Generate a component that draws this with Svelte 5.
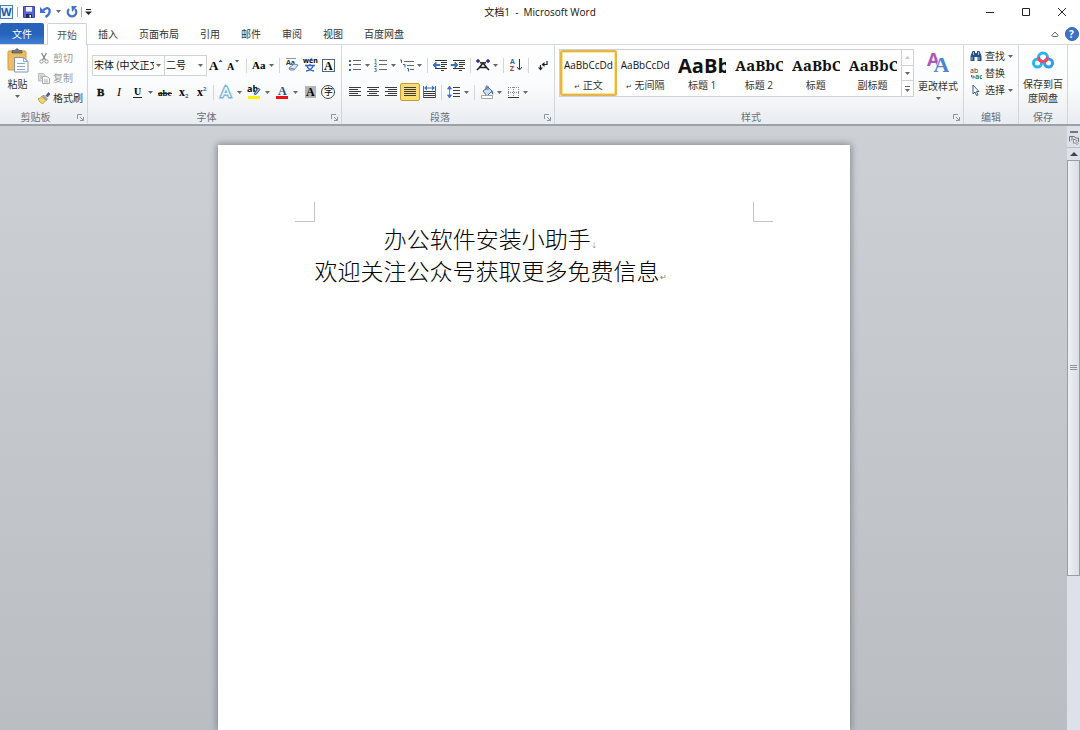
<script lang="ts">
	type Tool = {
		icon: string;
		label: string;
		menu?: boolean;
		tight?: boolean;
		active?: boolean;
		sep?: boolean;
	};

	const tabs = ['插入', '页面布局', '引用', '邮件', '审阅', '视图', '百度网盘'];

	const fontTop: Tool[] = [
		{ icon: 'grow', label: '增大字体' },
		{ icon: 'shrink', label: '缩小字体', sep: true },
		{ icon: 'case', label: '更改大小写', menu: true, tight: true, sep: true },
		{ icon: 'clear', label: '清除格式' },
		{ icon: 'pinyin', label: '拼音指南' },
		{ icon: 'boxed', label: '字符边框' }
	];

	const fontBottom: Tool[] = [
		{ icon: 'bold', label: '加粗' },
		{ icon: 'italic', label: '倾斜' },
		{ icon: 'underline', label: '下划线', menu: true },
		{ icon: 'strike', label: '删除线' },
		{ icon: 'sub', label: '下标' },
		{ icon: 'sup', label: '上标', sep: true },
		{ icon: 'effects', label: '文本效果', menu: true },
		{ icon: 'highlight', label: '突出显示', menu: true },
		{ icon: 'color', label: '字体颜色', menu: true },
		{ icon: 'shaded', label: '字符底纹' },
		{ icon: 'enclose', label: '带圈字符' }
	];

	const paraTop: Tool[] = [
		{ icon: 'bullets', label: '项目符号', menu: true, tight: true },
		{ icon: 'numbers', label: '编号', menu: true, tight: true },
		{ icon: 'levels', label: '多级列表', menu: true, tight: true, sep: true },
		{ icon: 'outdent', label: '减少缩进量' },
		{ icon: 'indent', label: '增加缩进量', sep: true },
		{ icon: 'asian', label: '中文版式', menu: true, tight: true, sep: true },
		{ icon: 'sort', label: '排序', sep: true },
		{ icon: 'marks', label: '显示编辑标记' }
	];

	const paraBottom: Tool[] = [
		{ icon: 'left', label: '左对齐' },
		{ icon: 'center', label: '居中' },
		{ icon: 'right', label: '右对齐' },
		{ icon: 'justify', label: '两端对齐', active: true },
		{ icon: 'spread', label: '分散对齐', sep: true },
		{ icon: 'spacing', label: '行距', menu: true, tight: true, sep: true },
		{ icon: 'fill', label: '底纹', menu: true, tight: true },
		{ icon: 'border', label: '边框', menu: true, tight: true }
	];

	const styles = [
		{ name: '正文', sample: 'AaBbCcDd', kind: 'plain', mark: true },
		{ name: '无间隔', sample: 'AaBbCcDd', kind: 'plain', mark: true },
		{ name: '标题 1', sample: 'AaBb', kind: 'h1' },
		{ name: '标题 2', sample: 'AaBbC', kind: 'h2' },
		{ name: '标题', sample: 'AaBbC', kind: 'h2' },
		{ name: '副标题', sample: 'AaBbC', kind: 'h2' }
	];

	let current = $state('正文');
</script>

{#snippet arrow()}
	<svg class="arrow" viewBox="0 0 5 3" aria-hidden="true"><path d="M0 0h5L2.5 3z" fill="#666" /></svg>
{/snippet}

{#snippet lines(rows: number[][])}
	{#each rows as [x1, x2, y]}
		<path d="M{x1} {y}.5H{x2}" stroke="#3c3c3c" />
	{/each}
{/snippet}

{#snippet glyph(name: string)}
	<svg class="glyph" viewBox="0 0 16 16" aria-hidden="true">
		{#if name === 'grow'}
			<text x="1" y="13" class="serif" font-size="13">A</text>
			<path d="M10.500 5h4L12.500 2.500z" fill="#2b5ba8" />
		{:else if name === 'shrink'}
			<text x="1" y="13" class="serif" font-size="10">A</text>
			<path d="M9 3h4l-2 2.500z" fill="#2b5ba8" />
		{:else if name === 'case'}
			<text x="1" y="12" class="serif" font-size="11">Aa</text>
		{:else if name === 'clear'}
			<text x="2" y="8" class="sans" font-size="7" font-weight="700" fill="#333">Aa</text>
			<path d="M2 1.500h10" stroke="#8b96a8" />
			<path d="M5 11l5-4 4 1-4 5H6z" fill="#dfe8f7" stroke="#6c86b4" />
			<path d="M5 11l5 1" stroke="#6c86b4" />
		{:else if name === 'pinyin'}
			<text x="1" y="6" class="sans" font-size="7" font-weight="700">wén</text>
			<path d="M3 8.500h10M8 7v2M5 9c1 3 4 4.500 7 5M11 9c-1 3-4 4.500-7 5" stroke="#3863c5" stroke-width="1.400" fill="none" />
		{:else if name === 'boxed'}
			<rect x="2.500" y="2.500" width="12" height="12" fill="#fff" stroke="#546682" />
			<text x="4" y="13" class="serif" font-size="12">A</text>
		{:else if name === 'bold'}
			<text x="4" y="12" class="serif" font-size="11" stroke="#222" stroke-width=".4">B</text>
		{:else if name === 'italic'}
			<text x="6" y="12" class="serif light" font-size="12" font-style="italic">I</text>
		{:else if name === 'underline'}
			<text x="5" y="11" class="serif" font-size="10">U</text>
			<path d="M4 13.500h9" stroke="#222" />
		{:else if name === 'strike'}
			<text x="1" y="12" class="serif" font-size="9">abc</text>
			<path d="M1 9.500h14" stroke="#222" />
		{:else if name === 'sub'}
			<text x="4" y="12" class="serif" font-size="12">x</text>
			<text x="10" y="14" class="sans" font-size="6" font-weight="700" fill="#3863c5">2</text>
		{:else if name === 'sup'}
			<text x="4" y="12" class="serif" font-size="12">x</text>
			<text x="10" y="7" class="sans" font-size="6" font-weight="700" fill="#3863c5">2</text>
		{:else if name === 'effects'}
			<text x="3" y="13" class="sans" font-size="15" fill="#fff" stroke="#7cb6dd" stroke-width="3" paint-order="stroke">A</text>
		{:else if name === 'highlight'}
			<text x="1" y="8" class="sans" font-size="9" font-weight="700">ab</text>
			<path d="M8 10l4-6 2 1.500-4 5z" fill="#8fb0df" stroke="#36578c" />
			<path d="M2 12h12v3H2z" fill="#ffef00" />
		{:else if name === 'color'}
			<text x="4" y="11" class="serif" font-size="12" fill="#254f8f">A</text>
			<path d="M2 12h12v3H2z" fill="#ee1111" />
		{:else if name === 'shaded'}
			<path d="M3 2h11v12H3z" fill="#b5b5b5" />
			<text x="4" y="12" class="serif" font-size="12">A</text>
		{:else if name === 'enclose'}
			<circle cx="8" cy="8" r="6.500" fill="#fff" stroke="#444" />
			<text x="4" y="11" class="cjk" font-size="9">字</text>
		{:else if name === 'bullets' || name === 'numbers'}
			{#each [3, 7, 12] as y, i}
				{#if name === 'bullets'}
					<rect x="2" y={y} width="2" height="2" fill="#3863b5" />
				{:else}
					<text x="1" y={y + 3} class="sans" font-size="5" font-weight="700" fill="#3863b5">{i + 1}</text>
				{/if}
				<path d="M6 {y}.500h8" stroke="#666" />
			{/each}
		{:else if name === 'levels'}
			<path d="M5 4.500h10M8 8.500h7M11 12.500h4" stroke="#666" />
			<path d="M1 3h1.500v3M4 7.500h2v3M8 11.500h1.500v3" stroke="#3863b5" fill="none" />
		{:else if name === 'outdent'}
			<path d="M3 3.500h12M9 5.500h6M9 7.500h6M9 9.500h4M3 11.500h12M9 13.500h3" stroke="#333" stroke-width="1.200" />
			<path d="M8 7.500H4V5L1 8l3 3V8.500h4z" fill="#3d73c9" stroke="#3d73c9" />
		{:else if name === 'indent'}
			<path d="M3 3.500h12M9 5.500h6M9 7.500h6M9 9.500h4M3 11.500h12M9 13.500h3" stroke="#333" stroke-width="1.200" />
			<path d="M1 7.500h4V5l3 3-3 3V8.500H1z" fill="#3d73c9" stroke="#3d73c9" />
		{:else if name === 'asian'}
			<path d="M2 13l2-2 4-5 4 5 2 2M4 10.500h8M5 5.500l3 1 3-1" fill="none" stroke="#222" stroke-width="1.600" />
			<path d="M3 2v4M1 4h4M13 2v4M11 4h4" stroke="#252595" stroke-width="1.400" />
		{:else if name === 'sort'}
			<text x="2" y="7" class="sans" font-size="7" font-weight="700" fill="#3567ad">A</text>
			<text x="2" y="14" class="sans" font-size="7" font-weight="700" fill="#a83a3a">Z</text>
			<path d="M11.500 2v10M9 10l2.500 3 2.500-3" stroke="#333" fill="none" />
		{:else if name === 'marks'}
			<path d="M14 4v3.500h-3" fill="none" stroke="#222" stroke-width="1.200" />
			<path d="M11.500 5v5L8.500 7.500z" fill="#222" />
			<path d="M7.500 8v4" stroke="#222" stroke-width="1.200" />
			<path d="M5 10.500h5l-2.500 3z" fill="#222" />
		{:else if name === 'left'}
			{@render lines([[2, 14, 3], [2, 11, 5], [2, 14, 7], [2, 11, 9], [2, 14, 11]])}
		{:else if name === 'center'}
			{@render lines([[2, 14, 3], [4, 12, 5], [2, 14, 7], [4, 12, 9], [2, 14, 11]])}
		{:else if name === 'right'}
			{@render lines([[2, 14, 3], [5, 14, 5], [2, 14, 7], [5, 14, 9], [2, 14, 11]])}
		{:else if name === 'justify'}
			{@render lines([[2, 14, 3], [2, 14, 5], [2, 14, 7], [2, 14, 9], [2, 14, 11]])}
		{:else if name === 'spread'}
			<path d="M2.500 2v12M14.500 2v12" stroke="#536b91" />
			{@render lines([[3, 14, 7], [3, 14, 9], [3, 14, 11], [3, 14, 13]])}
			<path d="M3 4l3-2.500v2h5v-2L14 4l-3 2.500v-2H6v2z" fill="#3d73c9" />
		{:else if name === 'spacing'}
			<path d="M3.500 3v10M1.500 5l2-3 2 3zM1.500 11l2 3 2-3z" fill="#3d73c9" stroke="#3d73c9" stroke-width=".800" />
			{@render lines([[7, 14, 3], [7, 14, 6], [7, 14, 9], [7, 14, 12]])}
		{:else if name === 'fill'}
			<path d="M4 7l5-4 4 4-5 5z" fill="#cfdff3" stroke="#49658e" />
			<path d="M7 6V2.500q1.500-1.500 2 0V6" fill="none" stroke="#49658e" />
			<path d="M12 6q3 1 2 5l-2-3z" fill="#3d73c9" />
			<path d="M2.500 11.500h11v3h-11z" fill="#fff" stroke="#a4a4a4" />
		{:else if name === 'border'}
			<path d="M3 3.500h11M3 8.500h11M3.500 3v10M8.500 3v10M13.500 3v10" stroke="#888" stroke-dasharray="1 1" />
			<path d="M3 13.500h11" stroke="#333" />
		{/if}
	</svg>
{/snippet}

{#snippet toolRow(items: Tool[])}
	{#each items as tool (tool.icon)}
		<button class="tool" class:active={tool.active} class:tight={tool.tight} aria-label={tool.label}>
			{@render glyph(tool.icon)}
			{#if tool.menu}<span class="drop">{@render arrow()}</span>{/if}
		</button>
		{#if tool.sep}<i class="sep"></i>{/if}
	{/each}
{/snippet}

{#snippet caption(text: string, launcher: boolean)}
	<div class="caption" class:launchable={launcher}>
		<span>{text}</span>
		{#if launcher}
			<button class="launcher" aria-label="{text}设置">
				<svg viewBox="0 0 7 7"><path d="M.5 5V.5H5M3 3l3 3M6.500 3v3.500H3" fill="none" stroke="#8c949d" /></svg>
			</button>
		{/if}
	</div>
{/snippet}

<div class="window">
	<header class="titlebar">
		<div class="quick">
			<svg class="logo" viewBox="0 0 14 14">
				<rect x=".5" y=".5" width="12" height="13" fill="#e9f2fb" stroke="#4b7fb8" />
				<text x="1" y="11" class="sans" font-size="11" font-weight="700" fill="#1e5aa5">W</text>
			</svg>
			<i class="bar"></i>
			<button aria-label="保存">
				<svg viewBox="0 0 12 12">
					<path d="M.5.5h11v11h-11z" fill="#5b66d2" stroke="#3c43a5" />
					<path d="M3 1h6v4.500H3z" fill="#f2f5ff" />
					<path d="M3 8h6v4H3z" fill="#222d62" />
					<path d="M6.500 9H8v2.500H6.500z" fill="#fff" />
				</svg>
			</button>
			<button class="undo" aria-label="撤消">
				<svg viewBox="0 0 12 12">
					<path d="M3 4.500Q8 0 9.500 4q1 4-4 7" fill="none" stroke="#4472cb" stroke-width="2.400" />
					<path d="M0 1v6h6z" fill="#4472cb" />
				</svg>
				{@render arrow()}
			</button>
			<button aria-label="重复">
				<svg viewBox="0 0 12 12">
					<path d="M3 3a4.300 4.300 0 1 0 6 0" fill="none" stroke="#4472cb" stroke-width="2.200" />
					<path d="M5.500 0H11L6 6z" fill="#4472cb" />
				</svg>
			</button>
			<i class="bar"></i>
			<button class="customize" aria-label="自定义快速访问工具栏">
				<svg viewBox="0 0 7 6"><path d="M1 .5h5" stroke="#222" /><path d="M0 2.500h7L3.500 6z" fill="#222" /></svg>
			</button>
		</div>
		<h1>文档1&nbsp; -&nbsp; Microsoft Word</h1>
		<div class="controls">
			<button aria-label="最小化"><svg viewBox="0 0 10 10"><path d="M1 5.500h8" /></svg></button>
			<button aria-label="最大化"><svg viewBox="0 0 10 10"><path d="M1.500 1.500h7v7h-7z" /></svg></button>
			<button aria-label="关闭"><svg viewBox="0 0 10 10"><path d="M1 1l8 8M9 1L1 9" /></svg></button>
		</div>
	</header>

	<nav class="tabs">
		<button class="file">文件</button>
		<button class="tab home">开始</button>
		{#each tabs as tab}
			<button class="tab">{tab}</button>
		{/each}
		<div class="help">
			<button aria-label="功能区最小化">
				<svg class="collapse" viewBox="0 0 8 6"><path d="M.7 4.500L4 1l3.300 3.500L6 5.500H2z" fill="#fff" stroke="#555" stroke-width=".9" /></svg>
			</button>
			<button aria-label="帮助">
				<svg class="question" viewBox="0 0 14 14">
					<circle cx="7" cy="7" r="6.500" fill="#3d72c8" stroke="#3560ad" />
					<text x="4" y="11" class="sans" font-size="10" font-weight="700" fill="#fff">?</text>
				</svg>
			</button>
		</div>
	</nav>

	<section class="ribbon">
		<div class="group">
			<div class="body clipboard">
				<button class="big paste">
					<svg viewBox="0 0 22 25">
						<rect x="1" y="3" width="18" height="19" rx="1" fill="#efbd62" stroke="#d49a3f" />
						<path d="M5 5V2.500h3Q10-1 12 2.500h3V5z" fill="#777b80" stroke="#55595e" stroke-width=".8" />
						<path d="M7.500 9.500h9l4.500 4v10.500H7.500z" fill="#fbfdff" stroke="#8595b0" />
						<path d="M16.500 9.500v4H21M10 15.500h8M10 18.500h8M10 21.500h8" fill="none" stroke="#8ba6d1" />
					</svg>
					<span>粘贴</span>
					{@render arrow()}
				</button>
				<div class="stack">
					<button class="item" disabled>
						<svg viewBox="0 0 12 12">
							<path d="M3.500 1l4 7M8.500 1l-4 7" stroke="#8c8c8c" stroke-width="1.400" />
							<circle cx="3.500" cy="9.500" r="1.700" fill="none" stroke="#999" />
							<circle cx="8.500" cy="9.500" r="1.700" fill="none" stroke="#999" />
						</svg>
						剪切
					</button>
					<button class="item" disabled>
						<svg viewBox="0 0 12 12">
							<path d="M.5 1.500h5l1.500 1.500v6H.5z" fill="#ddd" stroke="#bbb" />
							<path d="M4.500 4.500h4.500l2.500 2v5h-7z" fill="#f6f6f6" stroke="#aaa" />
							<path d="M6 8h4M6 9.800h4M2 4h2M2 6h2" stroke="#aaa" stroke-width=".8" />
						</svg>
						复制
					</button>
					<button class="item">
						<svg viewBox="0 0 12 12">
							<path d="M8 3.500L10.500.5 12 2 9.500 5z" fill="#54589b" stroke="#383b73" stroke-width=".6" />
							<path d="M5.500 3l4 4L8 8.500 4 4.500z" fill="#a9b1c4" stroke="#667" stroke-width=".6" />
							<path d="M4 4.500L8 8.500 4.500 12Q1 10 0 6.500q2 .5 4-2z" fill="#f2d66a" stroke="#a58a2d" stroke-width=".7" />
						</svg>
						格式刷
					</button>
				</div>
			</div>
			{@render caption('剪贴板', true)}
		</div>

		<div class="group">
			<div class="body rows">
				<div class="row">
					<label class="combo family">
						<select aria-label="字体"><option>宋体 (中文正文)</option><option>黑体</option></select>
						{@render arrow()}
					</label>
					<label class="combo size">
						<select aria-label="字号"><option>二号</option><option>三号</option></select>
						{@render arrow()}
					</label>
					{@render toolRow(fontTop)}
				</div>
				<div class="row">{@render toolRow(fontBottom)}</div>
			</div>
			{@render caption('字体', true)}
		</div>

		<div class="group">
			<div class="body rows">
				<div class="row">{@render toolRow(paraTop)}</div>
				<div class="row">{@render toolRow(paraBottom)}</div>
			</div>
			{@render caption('段落', true)}
		</div>

		<div class="group wide">
			<div class="body styles">
				<div class="gallery">
					{#each styles as style (style.name)}
						<button class="style" class:selected={current === style.name} onclick={() => (current = style.name)}>
							<span class="sample {style.kind}">{style.sample}</span>
							<span class="name">
								{#if style.mark}<small>↵</small>{/if}
								{style.name}
							</span>
						</button>
					{/each}
					<div class="scroller">
						<button aria-label="上一行" disabled><svg viewBox="0 0 5 3"><path d="M0 3h5L2.500 0z" fill="#c5c5c5" /></svg></button>
						<button aria-label="下一行">{@render arrow()}</button>
						<button aria-label="其他"><svg class="more" viewBox="0 0 5 6"><path d="M0 .5h5" stroke="#666" /><path d="M0 3h5L2.500 6z" fill="#666" /></svg></button>
					</div>
				</div>
				<button class="big change">
					<svg viewBox="0 0 24 25">
						<text x="0" y="16" class="sans" font-size="20" font-weight="700" fill="#ad58b8">A</text>
						<text x="7" y="23" class="serif" font-size="24" fill="#4d83d2" stroke="#fff" stroke-width="1" paint-order="stroke">A</text>
					</svg>
					<span>更改样式</span>
					{@render arrow()}
				</button>
			</div>
			{@render caption('样式', true)}
		</div>

		<div class="group">
			<div class="body edit">
				<button class="item">
					<svg viewBox="0 0 12 12">
						<path d="M2.500 1h2.500v2h2V1h2.500l2 5v5h-4V7h-3v4h-4V6z" fill="#294f86" />
						<path d="M2 7v3M9 7v3M3.500 2v3M8.500 2v3" stroke="#9cbce6" />
					</svg>
					<span>查找</span>
					{@render arrow()}
				</button>
				<button class="item">
					<svg viewBox="0 0 12 12">
						<text x="0" y="6" class="sans" font-size="7" fill="#333">ab</text>
						<text x="5" y="12" class="sans" font-size="7" font-weight="700" fill="#2e8542">ac</text>
						<path d="M1.500 8v2H4M3 8.500l1.500 1.500L3 11.500" fill="none" stroke="#3863b5" />
					</svg>
					<span>替换</span>
				</button>
				<button class="item">
					<svg viewBox="0 0 12 12">
						<path d="M3 1v9l2-2 1.500 3.500L8 11 6.500 7.500H9z" fill="#fff" stroke="#3a5c8c" />
					</svg>
					<span>选择</span>
					{@render arrow()}
				</button>
			</div>
			{@render caption('编辑', false)}
		</div>

		<div class="group">
			<div class="body save">
				<button class="big netdisk">
					<svg viewBox="0 0 22 25">
						<circle cx="5.500" cy="15" r="4" fill="none" stroke="#26b7ef" stroke-width="3" />
						<circle cx="16.500" cy="15" r="4" fill="none" stroke="#2d9ceb" stroke-width="3" />
						<path d="M6.500 9.500a4.500 4.500 0 0 1 9 0" fill="none" stroke="#26b7ef" stroke-width="3" />
						<path d="M6.500 9q.5 4.500 4.500 4.500T15.500 9" fill="none" stroke="#ef4866" stroke-width="3" />
					</svg>
					<span>保存到百度网盘</span>
				</button>
			</div>
			{@render caption('保存', false)}
		</div>
	</section>

	<main class="workspace">
		<div class="canvas">
			<article class="page">
				<div class="corners"><i class="corner"></i><i class="corner end"></i></div>
				<p>办公软件安装小助手<small>↓</small><br />欢迎关注公众号获取更多免费信息<small>↵</small></p>
			</article>
		</div>
		<aside class="scrollbar">
			<i class="split"></i>
			<button class="ruler" aria-label="标尺">
				<svg viewBox="0 0 10 10">
					<path d="M.5 6.500v-5h5l1 1.500h3v4M2 3h2M2 5h1" fill="none" stroke="#777" />
					<path d="M4 4l4 1.500-1 1 2 2L8 9.500l-2-2-1 1z" fill="#fff" stroke="#666" stroke-width=".8" />
				</svg>
			</button>
			<button class="up" aria-label="向上滚动"><svg viewBox="0 0 8 4"><path d="M0 4h8L4 0z" fill="#444" /></svg></button>
			<div class="track">
				<div class="thumb"><svg viewBox="0 0 7 6"><path d="M0 .5h7M0 2.500h7M0 4.500h7" stroke="#8e9299" /></svg></div>
			</div>
		</aside>
	</main>
</div>

<style>
	:global(body) {
		margin: 0;
	}

	.window {
		display: flex;
		flex-direction: column;
		min-height: 100vh;
		background: #fff;
		color: #333;
		font-family: 'Open Sans', 'Noto Sans CJK SC', sans-serif;
		font-size: 10px;
		line-height: 14px;
	}

	button {
		display: flex;
		align-items: center;
		justify-content: center;
		padding: 0;
		border: 0;
		background: none;
		color: inherit;
		font: inherit;
		white-space: nowrap;
	}

	svg {
		display: block;
		flex-shrink: 0;
	}

	.arrow {
		width: 5px;
		height: 3px;
	}

	.serif {
		font-family: 'Liberation Serif', serif;
		font-weight: 700;
	}

	.light {
		font-weight: 400;
	}

	.sans {
		font-family: 'Open Sans', sans-serif;
	}

	.cjk {
		font-family: 'Noto Sans CJK SC', sans-serif;
	}

	/* title bar */
	.titlebar {
		display: grid;
		grid-template-columns: 1fr auto 1fr;
		align-items: center;
		height: 23px;
	}

	h1 {
		margin: 0;
		color: #111;
		font-size: 10px;
		font-weight: 400;
	}

	.quick {
		display: flex;
		align-items: center;
		gap: 5px;
	}

	.quick svg {
		width: 12px;
		height: 12px;
	}

	.quick .logo {
		width: 14px;
		height: 14px;
	}

	.bar {
		width: 1px;
		height: 10px;
		margin-left: -2px;
		background: #aaa;
	}

	.undo {
		gap: 4px;
	}

	.quick .undo .arrow {
		width: 5px;
		height: 3px;
	}

	.quick .customize svg {
		width: 7px;
		height: 6px;
		margin-left: -2px;
	}

	.controls {
		display: flex;
		justify-content: flex-end;
	}

	.controls button {
		width: 36px;
		height: 23px;
	}

	.controls svg {
		width: 10px;
		height: 10px;
		fill: none;
		stroke: #222;
	}

	/* tabs */
	.tabs {
		display: flex;
		gap: 1px;
		height: 21px;
		border-bottom: 1px solid #d5d9de;
	}

	.file {
		width: 44px;
		border-radius: 2px 2px 0 0;
		background: linear-gradient(#2a62b8, #2563ba 50%, #3f7fd2);
		color: #fff;
	}

	.tab {
		padding: 0 10px;
	}

	.home {
		height: 22px;
		margin-left: 2px;
		padding: 0 9px;
		border: 1px solid #cfd3d8;
		border-bottom: 0;
		border-radius: 2px 2px 0 0;
		background: #fff;
		color: #555;
	}

	.help {
		display: flex;
		gap: 6px;
		margin-left: auto;
		padding-right: 1px;
	}

	.collapse {
		width: 8px;
		height: 6px;
	}

	.question {
		width: 14px;
		height: 14px;
	}

	/* ribbon */
	.ribbon {
		display: flex;
		height: 79px;
		padding-right: 12px;
		border-bottom: 2px solid #9da2a9;
		background: linear-gradient(#fff, #fbfcfd 50%, #e9ecf0);
	}

	.group {
		display: flex;
		flex-direction: column;
		border-right: 1px solid #d3d6da;
	}

	.wide {
		flex: 1;
		min-width: 0;
	}

	.body {
		display: flex;
		height: 65px;
	}

	.caption {
		display: flex;
		position: relative;
		justify-content: center;
		height: 14px;
		color: #66707c;
	}

	.launchable {
		padding-right: 16px;
	}

	.launcher {
		position: absolute;
		right: 3px;
		top: 4px;
	}

	.launcher svg {
		width: 7px;
		height: 7px;
	}

	.big {
		flex-direction: column;
		justify-content: flex-start;
		padding-top: 3px;
	}

	.big > svg:first-child {
		width: 22px;
		height: 25px;
	}

	.big span {
		margin: 4px 0;
	}

	.clipboard {
		gap: 3px;
		padding: 0 4px 0 0;
	}

	.paste {
		width: 35px;
	}

	.stack {
		display: flex;
		flex-direction: column;
		gap: 6px;
		padding-top: 6px;
	}

	.item {
		gap: 3px;
		justify-content: flex-start;
		height: 14px;
	}

	.item > svg:first-child {
		width: 12px;
		height: 12px;
	}

	.item:disabled {
		color: #999;
	}

	.rows {
		flex-direction: column;
		gap: 5px;
		padding: 9px 4px 0;
		box-sizing: border-box;
	}

	.row {
		display: flex;
		align-items: center;
		height: 22px;
	}

	.combo {
		display: flex;
		position: relative;
		align-items: center;
		box-sizing: border-box;
		height: 21px;
		border: 1px solid #cfd3d8;
		background: #fff;
	}

	.family {
		width: 73px;
	}

	.size {
		width: 43px;
		margin-left: -1px;
	}

	.combo select {
		appearance: none;
		width: 100%;
		padding: 0 10px 0 1px;
		border: 0;
		background: none;
		color: #111;
		font: inherit;
		overflow: hidden;
	}

	.combo .arrow {
		position: absolute;
		right: 3px;
		pointer-events: none;
	}

	.tool {
		height: 18px;
		padding: 0 1px;
	}

	.tool:has(.drop) {
		padding-right: 0;
	}

	.glyph {
		width: 16px;
		height: 16px;
	}

	.drop {
		display: flex;
		justify-content: center;
		width: 11px;
	}

	.tight .drop {
		width: 9px;
	}

	.tool.active {
		border: 1px solid #c9993a;
		border-radius: 2px;
		background: linear-gradient(#fbd978, #ffe06c);
	}

	.sep {
		width: 1px;
		height: 15px;
		margin: 0 3px;
		background: #d3d6da;
	}

	/* styles */
	.styles {
		gap: 4px;
		box-sizing: border-box;
		padding: 4px 5px 0 4px;
	}

	.gallery {
		display: flex;
		flex: 1;
		box-sizing: border-box;
		height: 48px;
		border: 1px solid #cfd3d8;
		background: #fff;
	}

	.style {
		flex: 1;
		flex-direction: column;
		box-sizing: border-box;
		min-width: 0;
		border: 2px solid transparent;
		border-radius: 2px;
	}

	.style.selected {
		border-color: #e5b54c;
		box-shadow: inset 0 0 0 1px #ffe590;
	}

	.sample {
		width: 48px;
		height: 25px;
		overflow: hidden;
		color: #111;
		line-height: 25px;
		text-align: left;
	}

	.plain {
		width: auto;
	}

	.h1 {
		font-size: 20px;
		font-weight: 700;
	}

	.h2 {
		font-family: 'Noto Serif', 'DejaVu Serif', serif;
		font-size: 15px;
		font-weight: 700;
	}

	.name {
		height: 16px;
	}

	.name small {
		font-family: 'DejaVu Sans', sans-serif;
		font-size: 7px;
	}

	.scroller {
		display: flex;
		flex-direction: column;
		width: 11px;
		border-left: 1px solid #cfd3d8;
	}

	.scroller button {
		flex: 1;
	}

	.scroller button + button {
		border-top: 1px solid #cfd3d8;
	}

	.scroller svg {
		width: 5px;
		height: 3px;
	}

	.scroller .more {
		height: 6px;
	}

	.change {
		padding-top: 1px;
	}

	.edit {
		flex-direction: column;
		gap: 3px;
		box-sizing: border-box;
		padding: 4px 5px 0 6px;
	}

	.save {
		padding: 0 4px;
	}

	.netdisk {
		width: 40px;
	}

	.netdisk span {
		white-space: normal;
	}

	/* document */
	.workspace {
		display: flex;
		flex: 1;
		background: linear-gradient(#cdd1d6, #babdc2);
	}

	.canvas {
		display: flex;
		flex: 1;
		justify-content: center;
		padding-top: 19px;
	}

	.page {
		box-sizing: border-box;
		width: 632px;
		padding: 57px 77px 0;
		background: #fff;
		box-shadow: 0 0 7px 1px #80858b;
		clip-path: inset(-10px -10px 0);
	}

	.corners {
		display: flex;
		justify-content: space-between;
	}

	.corner {
		box-sizing: border-box;
		width: 20px;
		height: 20px;
		border: solid #c4c4c4;
		border-width: 0 1px 1px 0;
	}

	.corner.end {
		border-width: 0 0 1px 1px;
	}

	p {
		width: fit-content;
		margin: 0 0 0 20px;
		color: #000;
		font-family: 'Noto Sans CJK SC', sans-serif;
		font-size: 23px;
		font-weight: 300;
		line-height: 32px;
		text-align: center;
	}

	p small {
		color: #777;
		font-family: 'DejaVu Sans', sans-serif;
		font-size: 8px;
		line-height: 8px;
	}

	.scrollbar {
		display: flex;
		flex-direction: column;
		align-items: center;
		width: 13px;
		background: #dde1e9;
	}

	.split {
		width: 8px;
		height: 2px;
		margin-top: 5px;
		background: #777;
	}

	.ruler {
		width: 100%;
		height: 15px;
		border-bottom: 1px solid #b9bec6;
	}

	.ruler svg {
		width: 10px;
		height: 10px;
	}

	.up {
		width: 100%;
		height: 12px;
	}

	.up svg {
		width: 8px;
		height: 4px;
	}

	.track {
		flex: 1;
		width: 100%;
	}

	.thumb {
		display: flex;
		align-items: center;
		justify-content: center;
		box-sizing: border-box;
		height: 73%;
		border: 1px solid #989da6;
		background: linear-gradient(90deg, #eef1f6, #d9dde5);
	}

	.thumb svg {
		width: 7px;
		height: 6px;
	}
</style>
